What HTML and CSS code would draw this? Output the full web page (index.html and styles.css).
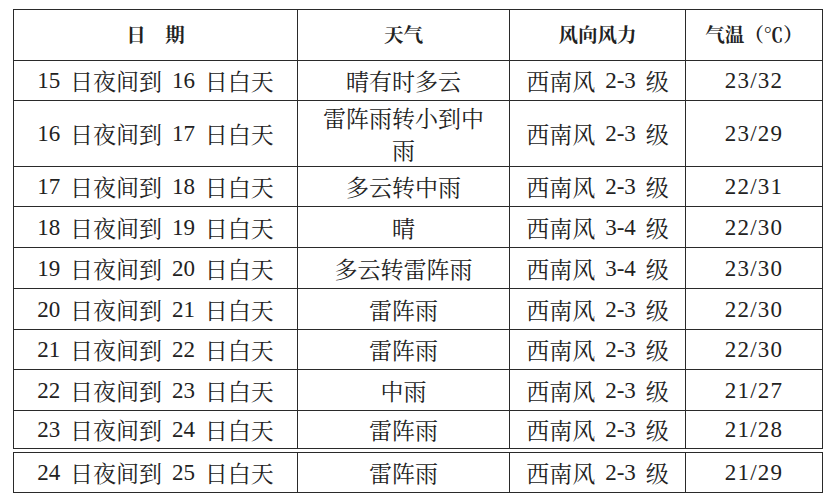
FILE: index.html
```html
<!DOCTYPE html>
<html lang="zh-CN">
<head>
<meta charset="utf-8">
<title>天气预报</title>
<link rel="stylesheet" href="styles.css">
</head>
<body>
<div class="page">
  <div class="grid main">
    <div class="cell head">日　期</div>
    <div class="cell head">天气</div>
    <div class="cell head">风向风力</div>
    <div class="cell head">气温（℃）</div>

    <div class="cell date"><span class="num">15</span> 日夜间到 <span class="num">16</span> 日白天</div>
    <div class="cell">晴有时多云</div>
    <div class="cell wind">西南风 <span class="num">2-3</span> 级</div>
    <div class="cell temp num">23/32</div>

    <div class="cell date"><span class="num">16</span> 日夜间到 <span class="num">17</span> 日白天</div>
    <div class="cell multi">雷阵雨转小到中<br>雨</div>
    <div class="cell wind">西南风 <span class="num">2-3</span> 级</div>
    <div class="cell temp num">23/29</div>

    <div class="cell date"><span class="num">17</span> 日夜间到 <span class="num">18</span> 日白天</div>
    <div class="cell">多云转中雨</div>
    <div class="cell wind">西南风 <span class="num">2-3</span> 级</div>
    <div class="cell temp num">22/31</div>

    <div class="cell date"><span class="num">18</span> 日夜间到 <span class="num">19</span> 日白天</div>
    <div class="cell">晴</div>
    <div class="cell wind">西南风 <span class="num">3-4</span> 级</div>
    <div class="cell temp num">22/30</div>

    <div class="cell date"><span class="num">19</span> 日夜间到 <span class="num">20</span> 日白天</div>
    <div class="cell">多云转雷阵雨</div>
    <div class="cell wind">西南风 <span class="num">3-4</span> 级</div>
    <div class="cell temp num">23/30</div>

    <div class="cell date"><span class="num">20</span> 日夜间到 <span class="num">21</span> 日白天</div>
    <div class="cell">雷阵雨</div>
    <div class="cell wind">西南风 <span class="num">2-3</span> 级</div>
    <div class="cell temp num">22/30</div>

    <div class="cell date"><span class="num">21</span> 日夜间到 <span class="num">22</span> 日白天</div>
    <div class="cell">雷阵雨</div>
    <div class="cell wind">西南风 <span class="num">2-3</span> 级</div>
    <div class="cell temp num">22/30</div>

    <div class="cell date"><span class="num">22</span> 日夜间到 <span class="num">23</span> 日白天</div>
    <div class="cell">中雨</div>
    <div class="cell wind">西南风 <span class="num">2-3</span> 级</div>
    <div class="cell temp num">21/27</div>

    <div class="cell date"><span class="num">23</span> 日夜间到 <span class="num">24</span> 日白天</div>
    <div class="cell">雷阵雨</div>
    <div class="cell wind">西南风 <span class="num">2-3</span> 级</div>
    <div class="cell temp num">21/28</div>
  </div>
  <div class="grid last">
    <div class="cell date"><span class="num">24</span> 日夜间到 <span class="num">25</span> 日白天</div>
    <div class="cell">雷阵雨</div>
    <div class="cell wind">西南风 <span class="num">2-3</span> 级</div>
    <div class="cell temp num">21/29</div>
  </div>
</div>
</body>
</html>
```

FILE: styles.css
```css
html, body {
  margin: 0;
  padding: 0;
  background: #ffffff;
}

.page {
  padding: 9px 0 0 13px;
  display: flex;
  flex-direction: column;
  align-items: flex-start;
}

.grid {
  display: grid;
  grid-template-columns: 284px 212px 176px 137px;
  border-top: 1px solid #2a2a2a;
  border-left: 1px solid #2a2a2a;
  font-family: "Noto Serif CJK SC", "Noto Sans CJK SC", sans-serif;
  color: #222222;
}

.main {
  grid-template-rows: 51px 40px 66px 40px 41px 41px 41px 40px 41px 38px;
}

.last {
  margin-top: 3px;
  grid-template-rows: 40px;
}

.cell {
  box-sizing: border-box;
  border-right: 1px solid #2a2a2a;
  border-bottom: 1px solid #2a2a2a;
  display: flex;
  align-items: center;
  justify-content: center;
  text-align: center;
  font-size: 23px;
  font-weight: 400;
  line-height: 1;
  white-space: pre;
}

.num {
  font-family: "Liberation Serif", "Times New Roman", "DejaVu Serif", serif;
}

.head {
  font-size: 19.5px;
  font-weight: 700;
  padding-bottom: 1px;
}

.date, .wind {
  word-spacing: 4px;
}

.temp {
  letter-spacing: 1.2px;
}

.multi {
  line-height: 32px;
}
```
